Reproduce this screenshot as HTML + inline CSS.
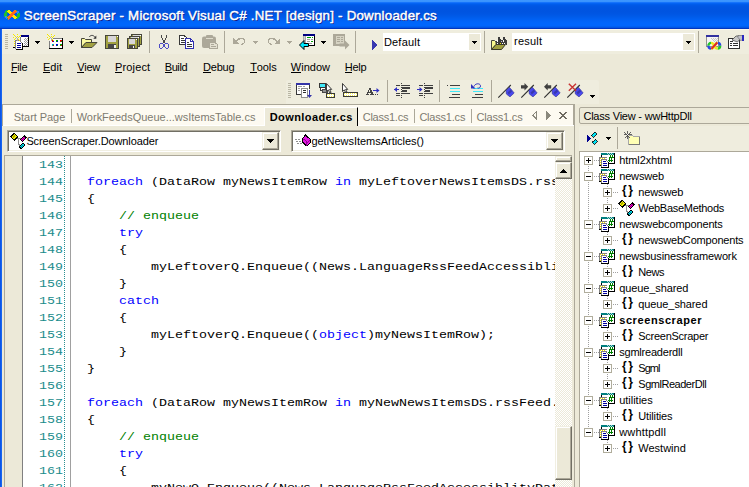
<!DOCTYPE html>
<html>
<head>
<meta charset="utf-8">
<title>ScreenScraper</title>
<style>
*{box-sizing:border-box;margin:0;padding:0}
html,body{width:749px;height:487px;overflow:hidden;background:#ece9d8}
body{position:relative;font-family:"Liberation Sans",sans-serif;font-size:11px;color:#000}
.a,.a>i,.a>b,.a>s{position:absolute;display:block}
i,s{font-style:normal;text-decoration:none}
svg{position:absolute;overflow:visible;shape-rendering:crispEdges}
.t{position:absolute;white-space:nowrap;font-size:11px;line-height:13px}
u{text-decoration:none;border-bottom:1px solid #000;display:inline-block;line-height:13px;height:12px;vertical-align:top}
.sep{position:absolute;width:1px;background:#aca899}
.grip{position:absolute;width:3px;background:repeating-linear-gradient(#b8b5a3 0,#b8b5a3 1px,rgba(0,0,0,0) 1px,rgba(0,0,0,0) 2px)}
.tri{position:absolute;width:0;height:0;border-left:3px solid transparent;border-right:3px solid transparent;border-top:3px solid #000}
.dith{background-image:conic-gradient(#fff 25%,#ece9d8 0 50%,#fff 0 75%,#ece9d8 0);background-size:2px 2px}
.btn{position:absolute;background:#ece9d8;border:1px solid;border-color:#f1efe2 #716f64 #716f64 #f1efe2;box-shadow:inset -1px -1px 0 #aca899,inset 1px 1px 0 #fff}
.sunk{position:absolute;background:#fff;border:1px solid;border-color:#aca899 #fff #fff #aca899;box-shadow:inset 1px 1px 0 #716f64,inset -1px -1px 0 #f1efe2}
.mono{font-family:"Liberation Mono",monospace;font-size:13.333px;line-height:20px;white-space:pre;transform:scaleY(.85);transform-origin:0 0}
.k{color:#0000ff}.c{color:#008000}
</style>
</head>
<body>
<div class="a" style="left:0;top:0;width:749px;height:29px;background:linear-gradient(#3c96ff 0px,#3a93fd 1.5px,#1573fb 2.5px,#0463f3 3.5px,#005ceb 4.5px,#0058e6 5.5px,#0055e2 7px,#0054e0 11px,#0056e3 14px,#005cea 17px,#0062f5 20px,#0066fc 23px,#0066fc 25.5px,#0060f2 26.5px,#0055e3 27.5px,#003cc8 28.2px,#002eb4 29px)"></div>
<div class="t" style="left:23.80px;top:8px;font-size:13.33px;letter-spacing:0.221px;line-height:15px;color:#fff;text-shadow:1px 1px 0 #0a1883;-webkit-text-stroke:0.45px #fff">ScreenScraper - Microsoft Visual C# .NET [design] - Downloader.cs</div>
<svg style="left:4px;top:10px" width="16" height="10" viewBox="0 0 16 10" shape-rendering="auto" fill="none">
<path d="M4.300 1.300 A3 3.400 0 0 0 4.300 8.100" stroke="#1fc030" stroke-width="2.600"/>
<path d="M1.400 5.800 A3 3.400 0 0 0 3.400 8" stroke="#2a90f0" stroke-width="2.200"/>
<path d="M11.600 1.300 A3 3.400 0 0 1 11.600 8.100" stroke="#1fc030" stroke-width="2.600"/>
<path d="M12.600 1.400 A3 3.400 0 0 1 14.400 3.400" stroke="#2a90f0" stroke-width="2.200"/>
<path d="M4 0.800 L12 8.600" stroke="#ffe400" stroke-width="3"/>
<path d="M3.800 8.800 L12.200 0.600" stroke="#ff6a1c" stroke-width="2.900"/>
</svg>
<div class="a" style="left:0;top:29px;width:2px;height:458px;background:linear-gradient(90deg,#0c55e6 0,#0c55e6 1px,#1765f0 1px,#1765f0 2px)"></div>
<div class="t" style="left:11.00px;top:61px;letter-spacing:-0.411px;"><u>F</u>ile</div>
<div class="t" style="left:42.90px;top:61px;letter-spacing:0.044px;"><u>E</u>dit</div>
<div class="t" style="left:77.30px;top:61px;letter-spacing:-0.352px;"><u>V</u>iew</div>
<div class="t" style="left:115.00px;top:61px;letter-spacing:0.142px;"><u>P</u>roject</div>
<div class="t" style="left:164.70px;top:61px;letter-spacing:-0.392px;"><u>B</u>uild</div>
<div class="t" style="left:203.00px;top:61px;letter-spacing:-0.205px;"><u>D</u>ebug</div>
<div class="t" style="left:250.20px;top:61px;letter-spacing:-0.097px;"><u>T</u>ools</div>
<div class="t" style="left:290.80px;top:61px;letter-spacing:0.015px;"><u>W</u>indow</div>
<div class="t" style="left:344.80px;top:61px;letter-spacing:-0.275px;"><u>H</u>elp</div>
<div class="a" style="left:2px;top:104px;width:572px;height:22px;background:#fdfaf1;border-top:1px solid #aca899;border-left:1px solid #aca899;border-right:1px solid #aca899"></div>
<div class="a" style="left:3px;top:125px;width:571px;height:1px;background:#fff"></div>
<div class="a" style="left:264px;top:107px;width:94px;height:19px;background:#ece9d8;border-left:1px solid #fff;border-top:1px solid #fff;border-right:1px solid #000"></div>
<div class="t" style="left:13.80px;top:111px;letter-spacing:-0.054px;color:#7d7b70">Start Page</div>
<div class="t" style="left:76.70px;top:111px;letter-spacing:-0.007px;color:#7d7b70">WorkFeedsQueue...wsItemsTable.cs</div>
<div class="t" style="left:269.70px;top:111px;font-weight:bold;letter-spacing:0.422px;color:#000">Downloader.cs</div>
<div class="t" style="left:362.70px;top:111px;letter-spacing:-0.248px;color:#7d7b70">Class1.cs</div>
<div class="t" style="left:419.40px;top:111px;letter-spacing:-0.211px;color:#7d7b70">Class1.cs</div>
<div class="t" style="left:476.40px;top:111px;letter-spacing:-0.173px;color:#7d7b70">Class1.cs</div>
<div class="sep" style="left:71px;top:109px;height:14px"></div>
<div class="sep" style="left:414px;top:109px;height:14px"></div>
<div class="sep" style="left:471px;top:109px;height:14px"></div>
<svg style="left:532px;top:111px" width="36" height="9" viewBox="0 0 36 9" shape-rendering="auto">
<path d="M4.5 0.8 L0.8 4.5 L4.5 8.2 Z" fill="none" stroke="#8a887d" stroke-width="1"/>
<path d="M14 0 L18.5 4.5 L14 9 Z" fill="#8a887d"/>
<path d="M27.500 1 L34.500 8 M34.500 1 L27.500 8" stroke="#6e6a60" stroke-width="1.900" fill="none"/>
</svg>
<div class="sunk" style="left:7px;top:130px;width:274px;height:22px"></div>
<div class="btn" style="left:262px;top:132px;width:17px;height:18px"></div>
<svg style="left:267px;top:139px" width="7" height="4" viewBox="0 0 7 4"><path d="M0 0 H7 V1 H6 V2 H5 V3 H4 V4 H3 V3 H2 V2 H1 V1 H0 Z" fill="#000"/></svg>
<div class="sunk" style="left:291px;top:130px;width:274px;height:22px"></div>
<div class="btn" style="left:546px;top:132px;width:17px;height:18px"></div>
<svg style="left:551px;top:139px" width="7" height="4" viewBox="0 0 7 4"><path d="M0 0 H7 V1 H6 V2 H5 V3 H4 V4 H3 V3 H2 V2 H1 V1 H0 Z" fill="#000"/></svg>
<div class="t" style="left:26.40px;top:135px;letter-spacing:-0.110px;">ScreenScraper.Downloader</div>
<div class="t" style="left:311.40px;top:135px;letter-spacing:-0.032px;">getNewsItemsArticles()</div>
<svg style="left:294px;top:134px" width="17" height="13" viewBox="0 0 17 13" shape-rendering="auto">
<path d="M1 5.5 H6 M2 7.5 H7 M3 9.5 H8" stroke="#909090" stroke-width="1" stroke-dasharray="2 1" fill="none"/>
<path d="M11.5 1 L8.3 5 L8.8 8.5 L12.8 12 L16 8.8 L16 5.2 Z" fill="#e218e2" stroke="#000" stroke-width="1"/>
<path d="M8.5 5 L12.5 8 L16 5.3 M12.5 8 L12.8 12" stroke="#8a008a" stroke-width="0.9" fill="none"/>
</svg>
<div class="a" style="left:4px;top:155px;width:568px;height:332px;background:#fff;border-top:1px solid #aca899;border-left:1px solid #aca899"></div>
<div class="a" style="left:5px;top:156px;width:17px;height:331px;background:#ece9d8"></div>
<div class="a" style="left:22px;top:156px;width:1px;height:331px;background:#808080"></div>
<div class="a" style="left:64px;top:156px;width:1px;height:331px;background:repeating-linear-gradient(#2a9090 0,#2a9090 1px,#fff 1px,#fff 2px)"></div>
<div class="a" style="left:70px;top:156px;width:1px;height:331px;background:#a0a0a0"></div>
<div class="a mono" style="left:23px;top:157px;width:40px;height:392px;overflow:hidden;color:#1a8c8c;text-align:right">143
144
145
146
147
148
149
150
151
152
153
154
155
156
157
158
159
160
161
162</div>
<div class="a mono" style="left:87px;top:157px;width:468px;height:392px;overflow:hidden">
<i style="position:static;display:inline" class="k">foreach</i> (DataRow myNewsItemRow <i style="position:static;display:inline" class="k">in</i> myLeftoverNewsItemsDS.rssFeed.Rows)
{
    <i style="position:static;display:inline" class="c">// enqueue</i>
    <i style="position:static;display:inline" class="k">try</i>
    {
        myLeftoverQ.Enqueue((News.LanguageRssFeedAccessiblityDataset.rssFeedRow)myNewsItemRow);
    }
    <i style="position:static;display:inline" class="k">catch</i>
    {
        myLeftoverQ.Enqueue((<i style="position:static;display:inline" class="k">object</i>)myNewsItemRow);
    }
}

<i style="position:static;display:inline" class="k">foreach</i> (DataRow myNewsItemRow <i style="position:static;display:inline" class="k">in</i> myNewNewsItemsDS.rssFeed.Rows)
{
    <i style="position:static;display:inline" class="c">// enqueue</i>
    <i style="position:static;display:inline" class="k">try</i>
    {
        myNewQ.Enqueue((News.LanguageRssFeedAccessiblityDataset.rssFeedRow)myNewsItemRow);</div>
<div class="a dith" style="left:555px;top:156px;width:17px;height:331px"></div>
<div class="btn" style="left:555px;top:156px;width:17px;height:6px"></div>
<div class="btn" style="left:555px;top:162px;width:17px;height:17px"></div>
<svg style="left:560px;top:169px" width="7" height="4" viewBox="0 0 7 4"><path d="M3 0 H4 V1 H5 V2 H6 V3 H7 V4 H0 V3 H1 V2 H2 V1 H3 Z" fill="#000"/></svg>
<div class="btn" style="left:555px;top:426px;width:17px;height:54px"></div>
<div class="a" style="left:574px;top:104px;width:1px;height:383px;background:#aca899"></div>
<div class="a" style="left:579px;top:107px;width:175px;height:17px;border:1px solid #aca899;border-radius:2px"></div>
<div class="t" style="left:583.40px;top:110px;letter-spacing:-0.208px;">Class View - wwHttpDll</div>
<div class="a" style="left:579px;top:126px;width:170px;height:25px;background:#efedde;border-radius:2px 0 0 0"></div>
<svg style="left:586px;top:131px" width="14" height="15" viewBox="0 0 14 15" shape-rendering="auto">
<path d="M1 3.500 L5.200 7.300 L1 11.200 Z" fill="#000090"/>
<path d="M5.300 4.200 L8.800 1.100 L10.900 3.200 L7.400 6.300 Z" fill="#00e4f4" stroke="#000" stroke-width="0.800"/>
<path d="M6.100 11.300 L9.600 8.200 L11.700 10.300 L8.200 13.400 Z" fill="#00e4f4" stroke="#000" stroke-width="0.800"/>
</svg>
<svg style="left:606px;top:137px" width="5" height="3" viewBox="0 0 5 3"><path d="M0 0 H5 V1 H4 V2 H3 V3 H2 V2 H1 V1 H0 Z" fill="#000"/></svg>
<div class="sep" style="left:617px;top:127px;height:22px"></div>
<svg style="left:623px;top:130px" width="18" height="15" viewBox="0 0 18 15" shape-rendering="auto">
<path d="M5.500 6.500 L6.500 5.500 H9.500 L10.500 6.500 H16 V14 H5.500 Z" fill="#ffffb4" stroke="#a8a8a8" stroke-width="1"/>
<path d="M6 14.500 H16.700 V7" stroke="#787878" stroke-width="1" fill="none"/>
<path d="M4.500 0.500 V8.500 M0.500 4.500 H8.500 M1.500 1.500 L7.500 7.500 M7.500 1.500 L1.500 7.500" stroke="#404040" stroke-width="0.800" fill="none"/>
<rect x="4" y="4" width="1" height="1" fill="#fff"/>
</svg>
<div class="a" style="left:579px;top:151px;width:175px;height:340px;background:#fff;border:1px solid #aca899"></div>
<svg style="left:10px;top:133px" width="17" height="16" viewBox="0 0 17 16" shape-rendering="auto">
<path d="M6.500 5.500 H10.500 M8.500 5.500 V11 L10 12.500" fill="none" stroke="#909090" stroke-width="1"/>
<path d="M0.500 3.800 L4.100 0.300 L7.800 3.800 L4.100 7.400 Z" fill="#ecec00" stroke="#000" stroke-width="1"/>
<path d="M2.800 4.700 L5.300 2.400" stroke="#b0a800" stroke-width="1.200"/>
<path d="M16.200 4.700 L14.300 2.800 L10.600 6.500 L12.500 8.400 Z" fill="#f000d0" stroke="#000" stroke-width="1"/>
<path d="M12 6.800 L14.600 4.300" stroke="#900078" stroke-width="1"/>
<path d="M14.900 12.100 L13 10.200 L9.300 13.900 L11.200 15.800 Z" fill="#00d8e8" stroke="#000" stroke-width="1"/>
<path d="M10.800 14.200 L13.400 11.700" stroke="#008898" stroke-width="1"/>
</svg>
<div class="a" style="left:588px;top:160px;width:1px;height:272px;background:repeating-linear-gradient(#a0a0a0 0,#a0a0a0 1px,rgba(0,0,0,0) 1px,rgba(0,0,0,0) 2px)"></div>
<div class="a" style="left:594px;top:160px;width:6px;height:1px;background:repeating-linear-gradient(90deg,#a0a0a0 0,#a0a0a0 1px,rgba(0,0,0,0) 1px,rgba(0,0,0,0) 2px)"></div>
<svg style="left:584px;top:156px" width="9" height="9" viewBox="0 0 9 9"><rect x="0.5" y="0.5" width="8" height="8" fill="#fff" stroke="#b0ad9c"/><path d="M2 4.5 H7" stroke="#000"/><path d="M4.5 2 V7" stroke="#000"/></svg>
<svg style="left:598px;top:152px" width="17" height="16" viewBox="0 0 17 16">
<rect x="3" y="1" width="13" height="2" fill="#008080"/>
<path d="M10 2 h1 v1 h-1 z M12 2 h1 v1 h-1 z M14 2 h1 v1 h-1 z M9 1 h1 v1 h-1 z M11 1 h1 v1 h-1 z M13 1 h1 v1 h-1 z" fill="#b0d8d8"/>
<rect x="3" y="3" width="1" height="3" fill="#000"/>
<rect x="16" y="1" width="1" height="11" fill="#000"/>
<rect x="11" y="11" width="6" height="1" fill="#000"/>
<path d="M12 3 h1 v3 h-1 z M14 3 h1 v3 h-1 z M11 6 h1 v4 h-1 z M13 6 h1 v4 h-1 z M11 5 h5 v1 h-5 z M10 8 h5 v1 h-5 z" fill="#008000"/>
<rect x="1" y="5" width="1" height="8" fill="#808080"/>
<rect x="1" y="5" width="8" height="1" fill="#808080"/>
<path d="M2 6 h1 v1 h-1 z M4 6 h1 v1 h-1 z M6 6 h1 v1 h-1 z M2 8 h1 v1 h-1 z M2 10 h1 v1 h-1 z M2 12 h1 v1 h-1 z" fill="#f0e000"/>
<rect x="1" y="13" width="2" height="1" fill="#000"/>
<rect x="4" y="8" width="6" height="7" fill="#fff"/>
<rect x="3" y="7" width="6" height="1" fill="#808080"/>
<rect x="3" y="7" width="1" height="8" fill="#808080"/>
<path d="M8 8 h1 v1 h-1 z M9 9 h1 v1 h-1 z" fill="#808080"/>
<path d="M5 9 h3 v1 h-3 z M5 11 h4 v1 h-4 z M5 13 h4 v1 h-4 z" fill="#0000a0"/>
<rect x="10" y="10" width="1" height="6" fill="#000"/>
<rect x="3" y="15" width="8" height="1" fill="#000"/>
</svg>
<div class="t" style="left:619.20px;top:154px;letter-spacing:-0.054px;">html2xhtml</div>
<div class="a" style="left:594px;top:176px;width:6px;height:1px;background:repeating-linear-gradient(90deg,#a0a0a0 0,#a0a0a0 1px,rgba(0,0,0,0) 1px,rgba(0,0,0,0) 2px)"></div>
<svg style="left:584px;top:172px" width="9" height="9" viewBox="0 0 9 9"><rect x="0.5" y="0.5" width="8" height="8" fill="#fff" stroke="#b0ad9c"/><path d="M2 4.5 H7" stroke="#000"/></svg>
<svg style="left:598px;top:168px" width="17" height="16" viewBox="0 0 17 16">
<rect x="3" y="1" width="13" height="2" fill="#008080"/>
<path d="M10 2 h1 v1 h-1 z M12 2 h1 v1 h-1 z M14 2 h1 v1 h-1 z M9 1 h1 v1 h-1 z M11 1 h1 v1 h-1 z M13 1 h1 v1 h-1 z" fill="#b0d8d8"/>
<rect x="3" y="3" width="1" height="3" fill="#000"/>
<rect x="16" y="1" width="1" height="11" fill="#000"/>
<rect x="11" y="11" width="6" height="1" fill="#000"/>
<path d="M12 3 h1 v3 h-1 z M14 3 h1 v3 h-1 z M11 6 h1 v4 h-1 z M13 6 h1 v4 h-1 z M11 5 h5 v1 h-5 z M10 8 h5 v1 h-5 z" fill="#008000"/>
<rect x="1" y="5" width="1" height="8" fill="#808080"/>
<rect x="1" y="5" width="8" height="1" fill="#808080"/>
<path d="M2 6 h1 v1 h-1 z M4 6 h1 v1 h-1 z M6 6 h1 v1 h-1 z M2 8 h1 v1 h-1 z M2 10 h1 v1 h-1 z M2 12 h1 v1 h-1 z" fill="#f0e000"/>
<rect x="1" y="13" width="2" height="1" fill="#000"/>
<rect x="4" y="8" width="6" height="7" fill="#fff"/>
<rect x="3" y="7" width="6" height="1" fill="#808080"/>
<rect x="3" y="7" width="1" height="8" fill="#808080"/>
<path d="M8 8 h1 v1 h-1 z M9 9 h1 v1 h-1 z" fill="#808080"/>
<path d="M5 9 h3 v1 h-3 z M5 11 h4 v1 h-4 z M5 13 h4 v1 h-4 z" fill="#0000a0"/>
<rect x="10" y="10" width="1" height="6" fill="#000"/>
<rect x="3" y="15" width="8" height="1" fill="#000"/>
</svg>
<div class="t" style="left:619.20px;top:170px;letter-spacing:-0.160px;">newsweb</div>
<div class="a" style="left:613px;top:192px;width:5px;height:1px;background:repeating-linear-gradient(90deg,#a0a0a0 0,#a0a0a0 1px,rgba(0,0,0,0) 1px,rgba(0,0,0,0) 2px)"></div>
<svg style="left:603px;top:188px" width="9" height="9" viewBox="0 0 9 9"><rect x="0.5" y="0.5" width="8" height="8" fill="#fff" stroke="#b0ad9c"/><path d="M2 4.5 H7" stroke="#000"/><path d="M4.5 2 V7" stroke="#000"/></svg>
<div class="a" style="left:607px;top:184px;width:1px;height:4px;background:repeating-linear-gradient(#a0a0a0 0,#a0a0a0 1px,rgba(0,0,0,0) 1px,rgba(0,0,0,0) 2px)"></div>
<div class="a" style="left:607px;top:198px;width:1px;height:6px;background:repeating-linear-gradient(#a0a0a0 0,#a0a0a0 1px,rgba(0,0,0,0) 1px,rgba(0,0,0,0) 2px)"></div>
<div class="t" style="left:622px;top:183px;font-weight:bold;font-size:12px;line-height:15px;letter-spacing:1.6px">{}</div>
<div class="t" style="left:638.30px;top:186px;letter-spacing:-0.127px;">newsweb</div>
<div class="a" style="left:613px;top:208px;width:5px;height:1px;background:repeating-linear-gradient(90deg,#a0a0a0 0,#a0a0a0 1px,rgba(0,0,0,0) 1px,rgba(0,0,0,0) 2px)"></div>
<svg style="left:603px;top:204px" width="9" height="9" viewBox="0 0 9 9"><rect x="0.5" y="0.5" width="8" height="8" fill="#fff" stroke="#b0ad9c"/><path d="M2 4.5 H7" stroke="#000"/><path d="M4.5 2 V7" stroke="#000"/></svg>
<div class="a" style="left:607px;top:200px;width:1px;height:4px;background:repeating-linear-gradient(#a0a0a0 0,#a0a0a0 1px,rgba(0,0,0,0) 1px,rgba(0,0,0,0) 2px)"></div>
<svg style="left:618px;top:200px" width="17" height="16" viewBox="0 0 17 16" shape-rendering="auto">
<path d="M6.500 5.500 H10.500 M8.500 5.500 V11 L10 12.500" fill="none" stroke="#909090" stroke-width="1"/>
<path d="M0.500 3.800 L4.100 0.300 L7.800 3.800 L4.100 7.400 Z" fill="#ecec00" stroke="#000" stroke-width="1"/>
<path d="M2.800 4.700 L5.300 2.400" stroke="#b0a800" stroke-width="1.200"/>
<path d="M16.200 4.700 L14.300 2.800 L10.600 6.500 L12.500 8.400 Z" fill="#f000d0" stroke="#000" stroke-width="1"/>
<path d="M12 6.800 L14.600 4.300" stroke="#900078" stroke-width="1"/>
<path d="M14.900 12.100 L13 10.200 L9.300 13.900 L11.200 15.800 Z" fill="#00d8e8" stroke="#000" stroke-width="1"/>
<path d="M10.800 14.200 L13.400 11.700" stroke="#008898" stroke-width="1"/>
</svg>
<div class="t" style="left:638.30px;top:202px;letter-spacing:-0.284px;">WebBaseMethods</div>
<div class="a" style="left:594px;top:224px;width:6px;height:1px;background:repeating-linear-gradient(90deg,#a0a0a0 0,#a0a0a0 1px,rgba(0,0,0,0) 1px,rgba(0,0,0,0) 2px)"></div>
<svg style="left:584px;top:220px" width="9" height="9" viewBox="0 0 9 9"><rect x="0.5" y="0.5" width="8" height="8" fill="#fff" stroke="#b0ad9c"/><path d="M2 4.5 H7" stroke="#000"/></svg>
<svg style="left:598px;top:216px" width="17" height="16" viewBox="0 0 17 16">
<rect x="3" y="1" width="13" height="2" fill="#008080"/>
<path d="M10 2 h1 v1 h-1 z M12 2 h1 v1 h-1 z M14 2 h1 v1 h-1 z M9 1 h1 v1 h-1 z M11 1 h1 v1 h-1 z M13 1 h1 v1 h-1 z" fill="#b0d8d8"/>
<rect x="3" y="3" width="1" height="3" fill="#000"/>
<rect x="16" y="1" width="1" height="11" fill="#000"/>
<rect x="11" y="11" width="6" height="1" fill="#000"/>
<path d="M12 3 h1 v3 h-1 z M14 3 h1 v3 h-1 z M11 6 h1 v4 h-1 z M13 6 h1 v4 h-1 z M11 5 h5 v1 h-5 z M10 8 h5 v1 h-5 z" fill="#008000"/>
<rect x="1" y="5" width="1" height="8" fill="#808080"/>
<rect x="1" y="5" width="8" height="1" fill="#808080"/>
<path d="M2 6 h1 v1 h-1 z M4 6 h1 v1 h-1 z M6 6 h1 v1 h-1 z M2 8 h1 v1 h-1 z M2 10 h1 v1 h-1 z M2 12 h1 v1 h-1 z" fill="#f0e000"/>
<rect x="1" y="13" width="2" height="1" fill="#000"/>
<rect x="4" y="8" width="6" height="7" fill="#fff"/>
<rect x="3" y="7" width="6" height="1" fill="#808080"/>
<rect x="3" y="7" width="1" height="8" fill="#808080"/>
<path d="M8 8 h1 v1 h-1 z M9 9 h1 v1 h-1 z" fill="#808080"/>
<path d="M5 9 h3 v1 h-3 z M5 11 h4 v1 h-4 z M5 13 h4 v1 h-4 z" fill="#0000a0"/>
<rect x="10" y="10" width="1" height="6" fill="#000"/>
<rect x="3" y="15" width="8" height="1" fill="#000"/>
</svg>
<div class="t" style="left:619.20px;top:218px;letter-spacing:-0.137px;">newswebcomponents</div>
<div class="a" style="left:613px;top:240px;width:5px;height:1px;background:repeating-linear-gradient(90deg,#a0a0a0 0,#a0a0a0 1px,rgba(0,0,0,0) 1px,rgba(0,0,0,0) 2px)"></div>
<svg style="left:603px;top:236px" width="9" height="9" viewBox="0 0 9 9"><rect x="0.5" y="0.5" width="8" height="8" fill="#fff" stroke="#b0ad9c"/><path d="M2 4.5 H7" stroke="#000"/><path d="M4.5 2 V7" stroke="#000"/></svg>
<div class="a" style="left:607px;top:232px;width:1px;height:4px;background:repeating-linear-gradient(#a0a0a0 0,#a0a0a0 1px,rgba(0,0,0,0) 1px,rgba(0,0,0,0) 2px)"></div>
<div class="t" style="left:622px;top:231px;font-weight:bold;font-size:12px;line-height:15px;letter-spacing:1.6px">{}</div>
<div class="t" style="left:638.30px;top:234px;letter-spacing:-0.183px;">newswebComponents</div>
<div class="a" style="left:594px;top:256px;width:6px;height:1px;background:repeating-linear-gradient(90deg,#a0a0a0 0,#a0a0a0 1px,rgba(0,0,0,0) 1px,rgba(0,0,0,0) 2px)"></div>
<svg style="left:584px;top:252px" width="9" height="9" viewBox="0 0 9 9"><rect x="0.5" y="0.5" width="8" height="8" fill="#fff" stroke="#b0ad9c"/><path d="M2 4.5 H7" stroke="#000"/></svg>
<svg style="left:598px;top:248px" width="17" height="16" viewBox="0 0 17 16">
<rect x="3" y="1" width="13" height="2" fill="#008080"/>
<path d="M10 2 h1 v1 h-1 z M12 2 h1 v1 h-1 z M14 2 h1 v1 h-1 z M9 1 h1 v1 h-1 z M11 1 h1 v1 h-1 z M13 1 h1 v1 h-1 z" fill="#b0d8d8"/>
<rect x="3" y="3" width="1" height="3" fill="#000"/>
<rect x="16" y="1" width="1" height="11" fill="#000"/>
<rect x="11" y="11" width="6" height="1" fill="#000"/>
<path d="M12 3 h1 v3 h-1 z M14 3 h1 v3 h-1 z M11 6 h1 v4 h-1 z M13 6 h1 v4 h-1 z M11 5 h5 v1 h-5 z M10 8 h5 v1 h-5 z" fill="#008000"/>
<rect x="1" y="5" width="1" height="8" fill="#808080"/>
<rect x="1" y="5" width="8" height="1" fill="#808080"/>
<path d="M2 6 h1 v1 h-1 z M4 6 h1 v1 h-1 z M6 6 h1 v1 h-1 z M2 8 h1 v1 h-1 z M2 10 h1 v1 h-1 z M2 12 h1 v1 h-1 z" fill="#f0e000"/>
<rect x="1" y="13" width="2" height="1" fill="#000"/>
<rect x="4" y="8" width="6" height="7" fill="#fff"/>
<rect x="3" y="7" width="6" height="1" fill="#808080"/>
<rect x="3" y="7" width="1" height="8" fill="#808080"/>
<path d="M8 8 h1 v1 h-1 z M9 9 h1 v1 h-1 z" fill="#808080"/>
<path d="M5 9 h3 v1 h-3 z M5 11 h4 v1 h-4 z M5 13 h4 v1 h-4 z" fill="#0000a0"/>
<rect x="10" y="10" width="1" height="6" fill="#000"/>
<rect x="3" y="15" width="8" height="1" fill="#000"/>
</svg>
<div class="t" style="left:619.20px;top:250px;letter-spacing:-0.137px;">newsbusinessframework</div>
<div class="a" style="left:613px;top:272px;width:5px;height:1px;background:repeating-linear-gradient(90deg,#a0a0a0 0,#a0a0a0 1px,rgba(0,0,0,0) 1px,rgba(0,0,0,0) 2px)"></div>
<svg style="left:603px;top:268px" width="9" height="9" viewBox="0 0 9 9"><rect x="0.5" y="0.5" width="8" height="8" fill="#fff" stroke="#b0ad9c"/><path d="M2 4.5 H7" stroke="#000"/><path d="M4.5 2 V7" stroke="#000"/></svg>
<div class="a" style="left:607px;top:264px;width:1px;height:4px;background:repeating-linear-gradient(#a0a0a0 0,#a0a0a0 1px,rgba(0,0,0,0) 1px,rgba(0,0,0,0) 2px)"></div>
<div class="t" style="left:622px;top:263px;font-weight:bold;font-size:12px;line-height:15px;letter-spacing:1.6px">{}</div>
<div class="t" style="left:638.30px;top:266px;letter-spacing:-0.405px;">News</div>
<div class="a" style="left:594px;top:288px;width:6px;height:1px;background:repeating-linear-gradient(90deg,#a0a0a0 0,#a0a0a0 1px,rgba(0,0,0,0) 1px,rgba(0,0,0,0) 2px)"></div>
<svg style="left:584px;top:284px" width="9" height="9" viewBox="0 0 9 9"><rect x="0.5" y="0.5" width="8" height="8" fill="#fff" stroke="#b0ad9c"/><path d="M2 4.5 H7" stroke="#000"/></svg>
<svg style="left:598px;top:280px" width="17" height="16" viewBox="0 0 17 16">
<rect x="3" y="1" width="13" height="2" fill="#008080"/>
<path d="M10 2 h1 v1 h-1 z M12 2 h1 v1 h-1 z M14 2 h1 v1 h-1 z M9 1 h1 v1 h-1 z M11 1 h1 v1 h-1 z M13 1 h1 v1 h-1 z" fill="#b0d8d8"/>
<rect x="3" y="3" width="1" height="3" fill="#000"/>
<rect x="16" y="1" width="1" height="11" fill="#000"/>
<rect x="11" y="11" width="6" height="1" fill="#000"/>
<path d="M12 3 h1 v3 h-1 z M14 3 h1 v3 h-1 z M11 6 h1 v4 h-1 z M13 6 h1 v4 h-1 z M11 5 h5 v1 h-5 z M10 8 h5 v1 h-5 z" fill="#008000"/>
<rect x="1" y="5" width="1" height="8" fill="#808080"/>
<rect x="1" y="5" width="8" height="1" fill="#808080"/>
<path d="M2 6 h1 v1 h-1 z M4 6 h1 v1 h-1 z M6 6 h1 v1 h-1 z M2 8 h1 v1 h-1 z M2 10 h1 v1 h-1 z M2 12 h1 v1 h-1 z" fill="#f0e000"/>
<rect x="1" y="13" width="2" height="1" fill="#000"/>
<rect x="4" y="8" width="6" height="7" fill="#fff"/>
<rect x="3" y="7" width="6" height="1" fill="#808080"/>
<rect x="3" y="7" width="1" height="8" fill="#808080"/>
<path d="M8 8 h1 v1 h-1 z M9 9 h1 v1 h-1 z" fill="#808080"/>
<path d="M5 9 h3 v1 h-3 z M5 11 h4 v1 h-4 z M5 13 h4 v1 h-4 z" fill="#0000a0"/>
<rect x="10" y="10" width="1" height="6" fill="#000"/>
<rect x="3" y="15" width="8" height="1" fill="#000"/>
</svg>
<div class="t" style="left:619.20px;top:282px;letter-spacing:-0.095px;">queue_shared</div>
<div class="a" style="left:613px;top:304px;width:5px;height:1px;background:repeating-linear-gradient(90deg,#a0a0a0 0,#a0a0a0 1px,rgba(0,0,0,0) 1px,rgba(0,0,0,0) 2px)"></div>
<svg style="left:603px;top:300px" width="9" height="9" viewBox="0 0 9 9"><rect x="0.5" y="0.5" width="8" height="8" fill="#fff" stroke="#b0ad9c"/><path d="M2 4.5 H7" stroke="#000"/><path d="M4.5 2 V7" stroke="#000"/></svg>
<div class="a" style="left:607px;top:296px;width:1px;height:4px;background:repeating-linear-gradient(#a0a0a0 0,#a0a0a0 1px,rgba(0,0,0,0) 1px,rgba(0,0,0,0) 2px)"></div>
<div class="t" style="left:622px;top:295px;font-weight:bold;font-size:12px;line-height:15px;letter-spacing:1.6px">{}</div>
<div class="t" style="left:638.30px;top:298px;letter-spacing:-0.104px;">queue_shared</div>
<div class="a" style="left:594px;top:320px;width:6px;height:1px;background:repeating-linear-gradient(90deg,#a0a0a0 0,#a0a0a0 1px,rgba(0,0,0,0) 1px,rgba(0,0,0,0) 2px)"></div>
<svg style="left:584px;top:316px" width="9" height="9" viewBox="0 0 9 9"><rect x="0.5" y="0.5" width="8" height="8" fill="#fff" stroke="#b0ad9c"/><path d="M2 4.5 H7" stroke="#000"/></svg>
<svg style="left:598px;top:312px" width="17" height="16" viewBox="0 0 17 16">
<rect x="3" y="1" width="13" height="2" fill="#008080"/>
<path d="M10 2 h1 v1 h-1 z M12 2 h1 v1 h-1 z M14 2 h1 v1 h-1 z M9 1 h1 v1 h-1 z M11 1 h1 v1 h-1 z M13 1 h1 v1 h-1 z" fill="#b0d8d8"/>
<rect x="3" y="3" width="1" height="3" fill="#000"/>
<rect x="16" y="1" width="1" height="11" fill="#000"/>
<rect x="11" y="11" width="6" height="1" fill="#000"/>
<path d="M12 3 h1 v3 h-1 z M14 3 h1 v3 h-1 z M11 6 h1 v4 h-1 z M13 6 h1 v4 h-1 z M11 5 h5 v1 h-5 z M10 8 h5 v1 h-5 z" fill="#008000"/>
<rect x="1" y="5" width="1" height="8" fill="#808080"/>
<rect x="1" y="5" width="8" height="1" fill="#808080"/>
<path d="M2 6 h1 v1 h-1 z M4 6 h1 v1 h-1 z M6 6 h1 v1 h-1 z M2 8 h1 v1 h-1 z M2 10 h1 v1 h-1 z M2 12 h1 v1 h-1 z" fill="#f0e000"/>
<rect x="1" y="13" width="2" height="1" fill="#000"/>
<rect x="4" y="8" width="6" height="7" fill="#fff"/>
<rect x="3" y="7" width="6" height="1" fill="#808080"/>
<rect x="3" y="7" width="1" height="8" fill="#808080"/>
<path d="M8 8 h1 v1 h-1 z M9 9 h1 v1 h-1 z" fill="#808080"/>
<path d="M5 9 h3 v1 h-3 z M5 11 h4 v1 h-4 z M5 13 h4 v1 h-4 z" fill="#0000a0"/>
<rect x="10" y="10" width="1" height="6" fill="#000"/>
<rect x="3" y="15" width="8" height="1" fill="#000"/>
</svg>
<div class="t" style="left:619.20px;top:314px;font-weight:bold;letter-spacing:0.589px;">screenscraper</div>
<div class="a" style="left:613px;top:336px;width:5px;height:1px;background:repeating-linear-gradient(90deg,#a0a0a0 0,#a0a0a0 1px,rgba(0,0,0,0) 1px,rgba(0,0,0,0) 2px)"></div>
<svg style="left:603px;top:332px" width="9" height="9" viewBox="0 0 9 9"><rect x="0.5" y="0.5" width="8" height="8" fill="#fff" stroke="#b0ad9c"/><path d="M2 4.5 H7" stroke="#000"/><path d="M4.5 2 V7" stroke="#000"/></svg>
<div class="a" style="left:607px;top:328px;width:1px;height:4px;background:repeating-linear-gradient(#a0a0a0 0,#a0a0a0 1px,rgba(0,0,0,0) 1px,rgba(0,0,0,0) 2px)"></div>
<div class="t" style="left:622px;top:327px;font-weight:bold;font-size:12px;line-height:15px;letter-spacing:1.6px">{}</div>
<div class="t" style="left:638.30px;top:330px;letter-spacing:-0.273px;">ScreenScraper</div>
<div class="a" style="left:594px;top:352px;width:6px;height:1px;background:repeating-linear-gradient(90deg,#a0a0a0 0,#a0a0a0 1px,rgba(0,0,0,0) 1px,rgba(0,0,0,0) 2px)"></div>
<svg style="left:584px;top:348px" width="9" height="9" viewBox="0 0 9 9"><rect x="0.5" y="0.5" width="8" height="8" fill="#fff" stroke="#b0ad9c"/><path d="M2 4.5 H7" stroke="#000"/></svg>
<svg style="left:598px;top:344px" width="17" height="16" viewBox="0 0 17 16">
<rect x="3" y="1" width="13" height="2" fill="#008080"/>
<path d="M10 2 h1 v1 h-1 z M12 2 h1 v1 h-1 z M14 2 h1 v1 h-1 z M9 1 h1 v1 h-1 z M11 1 h1 v1 h-1 z M13 1 h1 v1 h-1 z" fill="#b0d8d8"/>
<rect x="3" y="3" width="1" height="3" fill="#000"/>
<rect x="16" y="1" width="1" height="11" fill="#000"/>
<rect x="11" y="11" width="6" height="1" fill="#000"/>
<path d="M12 3 h1 v3 h-1 z M14 3 h1 v3 h-1 z M11 6 h1 v4 h-1 z M13 6 h1 v4 h-1 z M11 5 h5 v1 h-5 z M10 8 h5 v1 h-5 z" fill="#008000"/>
<rect x="1" y="5" width="1" height="8" fill="#808080"/>
<rect x="1" y="5" width="8" height="1" fill="#808080"/>
<path d="M2 6 h1 v1 h-1 z M4 6 h1 v1 h-1 z M6 6 h1 v1 h-1 z M2 8 h1 v1 h-1 z M2 10 h1 v1 h-1 z M2 12 h1 v1 h-1 z" fill="#f0e000"/>
<rect x="1" y="13" width="2" height="1" fill="#000"/>
<rect x="4" y="8" width="6" height="7" fill="#fff"/>
<rect x="3" y="7" width="6" height="1" fill="#808080"/>
<rect x="3" y="7" width="1" height="8" fill="#808080"/>
<path d="M8 8 h1 v1 h-1 z M9 9 h1 v1 h-1 z" fill="#808080"/>
<path d="M5 9 h3 v1 h-3 z M5 11 h4 v1 h-4 z M5 13 h4 v1 h-4 z" fill="#0000a0"/>
<rect x="10" y="10" width="1" height="6" fill="#000"/>
<rect x="3" y="15" width="8" height="1" fill="#000"/>
</svg>
<div class="t" style="left:619.20px;top:346px;letter-spacing:-0.211px;">sgmlreaderdll</div>
<div class="a" style="left:613px;top:368px;width:5px;height:1px;background:repeating-linear-gradient(90deg,#a0a0a0 0,#a0a0a0 1px,rgba(0,0,0,0) 1px,rgba(0,0,0,0) 2px)"></div>
<svg style="left:603px;top:364px" width="9" height="9" viewBox="0 0 9 9"><rect x="0.5" y="0.5" width="8" height="8" fill="#fff" stroke="#b0ad9c"/><path d="M2 4.5 H7" stroke="#000"/><path d="M4.5 2 V7" stroke="#000"/></svg>
<div class="a" style="left:607px;top:360px;width:1px;height:4px;background:repeating-linear-gradient(#a0a0a0 0,#a0a0a0 1px,rgba(0,0,0,0) 1px,rgba(0,0,0,0) 2px)"></div>
<div class="a" style="left:607px;top:374px;width:1px;height:6px;background:repeating-linear-gradient(#a0a0a0 0,#a0a0a0 1px,rgba(0,0,0,0) 1px,rgba(0,0,0,0) 2px)"></div>
<div class="t" style="left:622px;top:359px;font-weight:bold;font-size:12px;line-height:15px;letter-spacing:1.6px">{}</div>
<div class="t" style="left:638.30px;top:362px;letter-spacing:-0.954px;">Sgml</div>
<div class="a" style="left:613px;top:384px;width:5px;height:1px;background:repeating-linear-gradient(90deg,#a0a0a0 0,#a0a0a0 1px,rgba(0,0,0,0) 1px,rgba(0,0,0,0) 2px)"></div>
<svg style="left:603px;top:380px" width="9" height="9" viewBox="0 0 9 9"><rect x="0.5" y="0.5" width="8" height="8" fill="#fff" stroke="#b0ad9c"/><path d="M2 4.5 H7" stroke="#000"/><path d="M4.5 2 V7" stroke="#000"/></svg>
<div class="a" style="left:607px;top:376px;width:1px;height:4px;background:repeating-linear-gradient(#a0a0a0 0,#a0a0a0 1px,rgba(0,0,0,0) 1px,rgba(0,0,0,0) 2px)"></div>
<div class="t" style="left:622px;top:375px;font-weight:bold;font-size:12px;line-height:15px;letter-spacing:1.6px">{}</div>
<div class="t" style="left:638.30px;top:378px;letter-spacing:-0.474px;">SgmlReaderDll</div>
<div class="a" style="left:594px;top:400px;width:6px;height:1px;background:repeating-linear-gradient(90deg,#a0a0a0 0,#a0a0a0 1px,rgba(0,0,0,0) 1px,rgba(0,0,0,0) 2px)"></div>
<svg style="left:584px;top:396px" width="9" height="9" viewBox="0 0 9 9"><rect x="0.5" y="0.5" width="8" height="8" fill="#fff" stroke="#b0ad9c"/><path d="M2 4.5 H7" stroke="#000"/></svg>
<svg style="left:598px;top:392px" width="17" height="16" viewBox="0 0 17 16">
<rect x="3" y="1" width="13" height="2" fill="#008080"/>
<path d="M10 2 h1 v1 h-1 z M12 2 h1 v1 h-1 z M14 2 h1 v1 h-1 z M9 1 h1 v1 h-1 z M11 1 h1 v1 h-1 z M13 1 h1 v1 h-1 z" fill="#b0d8d8"/>
<rect x="3" y="3" width="1" height="3" fill="#000"/>
<rect x="16" y="1" width="1" height="11" fill="#000"/>
<rect x="11" y="11" width="6" height="1" fill="#000"/>
<path d="M12 3 h1 v3 h-1 z M14 3 h1 v3 h-1 z M11 6 h1 v4 h-1 z M13 6 h1 v4 h-1 z M11 5 h5 v1 h-5 z M10 8 h5 v1 h-5 z" fill="#008000"/>
<rect x="1" y="5" width="1" height="8" fill="#808080"/>
<rect x="1" y="5" width="8" height="1" fill="#808080"/>
<path d="M2 6 h1 v1 h-1 z M4 6 h1 v1 h-1 z M6 6 h1 v1 h-1 z M2 8 h1 v1 h-1 z M2 10 h1 v1 h-1 z M2 12 h1 v1 h-1 z" fill="#f0e000"/>
<rect x="1" y="13" width="2" height="1" fill="#000"/>
<rect x="4" y="8" width="6" height="7" fill="#fff"/>
<rect x="3" y="7" width="6" height="1" fill="#808080"/>
<rect x="3" y="7" width="1" height="8" fill="#808080"/>
<path d="M8 8 h1 v1 h-1 z M9 9 h1 v1 h-1 z" fill="#808080"/>
<path d="M5 9 h3 v1 h-3 z M5 11 h4 v1 h-4 z M5 13 h4 v1 h-4 z" fill="#0000a0"/>
<rect x="10" y="10" width="1" height="6" fill="#000"/>
<rect x="3" y="15" width="8" height="1" fill="#000"/>
</svg>
<div class="t" style="left:619.20px;top:394px;letter-spacing:-0.016px;">utilities</div>
<div class="a" style="left:613px;top:416px;width:5px;height:1px;background:repeating-linear-gradient(90deg,#a0a0a0 0,#a0a0a0 1px,rgba(0,0,0,0) 1px,rgba(0,0,0,0) 2px)"></div>
<svg style="left:603px;top:412px" width="9" height="9" viewBox="0 0 9 9"><rect x="0.5" y="0.5" width="8" height="8" fill="#fff" stroke="#b0ad9c"/><path d="M2 4.5 H7" stroke="#000"/><path d="M4.5 2 V7" stroke="#000"/></svg>
<div class="a" style="left:607px;top:408px;width:1px;height:4px;background:repeating-linear-gradient(#a0a0a0 0,#a0a0a0 1px,rgba(0,0,0,0) 1px,rgba(0,0,0,0) 2px)"></div>
<div class="t" style="left:622px;top:407px;font-weight:bold;font-size:12px;line-height:15px;letter-spacing:1.6px">{}</div>
<div class="t" style="left:638.30px;top:410px;letter-spacing:-0.144px;">Utilities</div>
<div class="a" style="left:594px;top:432px;width:6px;height:1px;background:repeating-linear-gradient(90deg,#a0a0a0 0,#a0a0a0 1px,rgba(0,0,0,0) 1px,rgba(0,0,0,0) 2px)"></div>
<svg style="left:584px;top:428px" width="9" height="9" viewBox="0 0 9 9"><rect x="0.5" y="0.5" width="8" height="8" fill="#fff" stroke="#b0ad9c"/><path d="M2 4.5 H7" stroke="#000"/></svg>
<svg style="left:598px;top:424px" width="17" height="16" viewBox="0 0 17 16">
<rect x="3" y="1" width="13" height="2" fill="#008080"/>
<path d="M10 2 h1 v1 h-1 z M12 2 h1 v1 h-1 z M14 2 h1 v1 h-1 z M9 1 h1 v1 h-1 z M11 1 h1 v1 h-1 z M13 1 h1 v1 h-1 z" fill="#b0d8d8"/>
<rect x="3" y="3" width="1" height="3" fill="#000"/>
<rect x="16" y="1" width="1" height="11" fill="#000"/>
<rect x="11" y="11" width="6" height="1" fill="#000"/>
<path d="M12 3 h1 v3 h-1 z M14 3 h1 v3 h-1 z M11 6 h1 v4 h-1 z M13 6 h1 v4 h-1 z M11 5 h5 v1 h-5 z M10 8 h5 v1 h-5 z" fill="#008000"/>
<rect x="1" y="5" width="1" height="8" fill="#808080"/>
<rect x="1" y="5" width="8" height="1" fill="#808080"/>
<path d="M2 6 h1 v1 h-1 z M4 6 h1 v1 h-1 z M6 6 h1 v1 h-1 z M2 8 h1 v1 h-1 z M2 10 h1 v1 h-1 z M2 12 h1 v1 h-1 z" fill="#f0e000"/>
<rect x="1" y="13" width="2" height="1" fill="#000"/>
<rect x="4" y="8" width="6" height="7" fill="#fff"/>
<rect x="3" y="7" width="6" height="1" fill="#808080"/>
<rect x="3" y="7" width="1" height="8" fill="#808080"/>
<path d="M8 8 h1 v1 h-1 z M9 9 h1 v1 h-1 z" fill="#808080"/>
<path d="M5 9 h3 v1 h-3 z M5 11 h4 v1 h-4 z M5 13 h4 v1 h-4 z" fill="#0000a0"/>
<rect x="10" y="10" width="1" height="6" fill="#000"/>
<rect x="3" y="15" width="8" height="1" fill="#000"/>
</svg>
<div class="t" style="left:619.20px;top:426px;letter-spacing:0.181px;">wwhttpdll</div>
<div class="a" style="left:613px;top:448px;width:5px;height:1px;background:repeating-linear-gradient(90deg,#a0a0a0 0,#a0a0a0 1px,rgba(0,0,0,0) 1px,rgba(0,0,0,0) 2px)"></div>
<svg style="left:603px;top:444px" width="9" height="9" viewBox="0 0 9 9"><rect x="0.5" y="0.5" width="8" height="8" fill="#fff" stroke="#b0ad9c"/><path d="M2 4.5 H7" stroke="#000"/><path d="M4.5 2 V7" stroke="#000"/></svg>
<div class="a" style="left:607px;top:440px;width:1px;height:4px;background:repeating-linear-gradient(#a0a0a0 0,#a0a0a0 1px,rgba(0,0,0,0) 1px,rgba(0,0,0,0) 2px)"></div>
<div class="t" style="left:622px;top:439px;font-weight:bold;font-size:12px;line-height:15px;letter-spacing:1.6px">{}</div>
<div class="t" style="left:638.30px;top:442px;">Westwind</div>
<div class="a" style="left:2px;top:29px;width:747px;height:25px;background:#efedde;border-top:1px solid #f9f7ec"></div>
<div class="grip" style="left:5px;top:34px;height:15px"></div>
<svg style="left:13px;top:34px" width="17" height="16" viewBox="0 0 17 16"><rect x="8" y="3" width="7" height="9" fill="#fff"/><path d="M12 4 h1 v1 h-1 z M14 4 h1 v1 h-1 z M11 5 h1 v1 h-1 z M13 5 h1 v1 h-1 z M12 6 h1 v1 h-1 z M14 6 h1 v1 h-1 z M11 7 h1 v1 h-1 z M13 7 h1 v1 h-1 z M12 8 h1 v1 h-1 z M14 8 h1 v1 h-1 z M11 9 h1 v1 h-1 z M13 9 h1 v1 h-1 z M12 10 h1 v1 h-1 z M14 10 h1 v1 h-1 z M13 11 h1 v1 h-1 z M11 11 h1 v1 h-1 z" fill="#a0a0a0"/><rect x="8" y="1" width="8" height="2" fill="#000080"/><rect x="15" y="3" width="1" height="10" fill="#000"/><rect x="9" y="12" width="7" height="1" fill="#000"/><rect x="7" y="3" width="1" height="4" fill="#808080"/><rect x="3" y="7" width="6" height="8" fill="#fff"/><rect x="2" y="7" width="1" height="8" fill="#808080"/><rect x="2" y="6" width="5" height="1" fill="#808080"/><path d="M7 7 h1 v1 h-1 z M8 8 h1 v1 h-1 z" fill="#808080"/><rect x="9" y="9" width="1" height="7" fill="#000"/><rect x="3" y="15" width="7" height="1" fill="#000"/><rect x="0" y="13" width="2" height="1" fill="#000"/><path d="M4 9 h4 v1 h-4 z M4 11 h4 v1 h-4 z M4 13 h4 v1 h-4 z" fill="#0000a0"/><path d="M1 7 h1 v1 h-1 z M1 9 h1 v1 h-1 z M1 11 h1 v1 h-1 z" fill="#f4e800"/><path d="M4 0 v1 h1 v-1 z M4 2 v1 h1 v-1 z M0 0 h1 v1 h-1 z M1 1 h1 v1 h-1 z M2 2 h1 v1 h-1 z M7 1 h1 v1 h-1 z M6 2 h1 v1 h-1 z M0 3 h1 v1 h-1 z M2 4 h1 v1 h-1 z M1 5 h1 v1 h-1 z M5 5 h1 v1 h-1 z M6 6 h1 v1 h-1 z M5 3 h1 v1 h-1 z" fill="#f4e800"/><path d="M3 3 h1 v1 h-1 z M4 4 h1 v3 h-1 z" fill="#b0b0b0"/></svg>
<svg style="left:35px;top:41px" width="5" height="3" viewBox="0 0 5 3"><path d="M0 0 H5 V1 H4 V2 H3 V3 H2 V2 H1 V1 H0 Z" fill="#000"/></svg>
<svg style="left:47px;top:34px" width="16" height="15" viewBox="0 0 16 15"><rect x="3" y="5" width="12" height="9" fill="#fff"/><rect x="2" y="7" width="1" height="7" fill="#808080"/><rect x="6" y="4" width="9" height="1" fill="#808080"/><rect x="15" y="4" width="1" height="11" fill="#000"/><rect x="2" y="14" width="14" height="1" fill="#000"/><rect x="5" y="6" width="2" height="2" fill="#e00000"/><rect x="6" y="7" width="1" height="1" fill="#0000e0"/><rect x="9" y="6" width="2" height="2" fill="#00a000"/><rect x="10" y="7" width="1" height="1" fill="#0000e0"/><rect x="13" y="6" width="2" height="2" fill="#e00000"/><rect x="14" y="7" width="1" height="1" fill="#00a000"/><rect x="5" y="10" width="2" height="2" fill="#00b0b0"/><rect x="6" y="11" width="1" height="1" fill="#e00000"/><rect x="9" y="10" width="2" height="2" fill="#0000e0"/><rect x="10" y="11" width="1" height="1" fill="#00a000"/><rect x="13" y="10" width="2" height="2" fill="#00a000"/><rect x="14" y="11" width="1" height="1" fill="#e00000"/><path d="M4 0 v1 h1 v-1 z M4 2 v1 h1 v-1 z M0 0 h1 v1 h-1 z M1 1 h1 v1 h-1 z M2 2 h1 v1 h-1 z M7 1 h1 v1 h-1 z M6 2 h1 v1 h-1 z M0 3 h1 v1 h-1 z M2 4 h1 v1 h-1 z M1 5 h1 v1 h-1 z M5 5 h1 v1 h-1 z M6 6 h1 v1 h-1 z M5 3 h1 v1 h-1 z" fill="#f4e800"/><path d="M3 3 h1 v1 h-1 z M4 4 h1 v3 h-1 z" fill="#b0b0b0"/></svg>
<svg style="left:69px;top:41px" width="5" height="3" viewBox="0 0 5 3"><path d="M0 0 H5 V1 H4 V2 H3 V3 H2 V2 H1 V1 H0 Z" fill="#000"/></svg>
<svg style="left:81px;top:34px" width="17" height="14" viewBox="0 0 17 14"><path d="M0.500 13.500 V4.500 H3.500 L4.500 5.500 H10.500 V8.500 H5 Z" fill="#fafaa0" stroke="#46463a" shape-rendering="auto"/><path d="M0.500 13.500 L5 8.500 H16 L11 13.500 Z" fill="#a1a141" stroke="#46463a" shape-rendering="auto"/><path d="M8.300 3 C9.500 0.800 12.500 0.800 14 3.300" stroke="#404040" stroke-width="1" fill="none" shape-rendering="auto"/><path d="M15.300 1.600 V4.800 H12.300 Z" fill="#303030" shape-rendering="auto"/></svg>
<svg style="left:105px;top:35px" width="14" height="14" viewBox="0 0 14 14"><g transform="translate(0,0)"><rect x="0.500" y="0.500" width="13" height="13" fill="#a1a141" stroke="#46463a"/><rect x="3" y="1" width="8" height="6" fill="#d8d6d8"/><rect x="12" y="1" width="1" height="1" fill="#fff"/><rect x="3" y="9" width="8" height="4" fill="#484848"/><rect x="9" y="10" width="2" height="3" fill="#f0f0f0"/></g></svg>
<svg style="left:127px;top:34px" width="16" height="15" viewBox="0 0 16 15"><rect x="4.500" y="0.500" width="10" height="10" fill="#a1a141" stroke="#46463a"/><rect x="6" y="1" width="7" height="1" fill="#d8d6d8"/><rect x="13" y="1" width="1" height="1" fill="#fff"/><rect x="2.500" y="2.500" width="10" height="10" fill="#a1a141" stroke="#46463a"/><rect x="4" y="3" width="7" height="1" fill="#d8d6d8"/><rect x="11" y="3" width="1" height="1" fill="#fff"/><rect x="0.500" y="4.500" width="10" height="10" fill="#a1a141" stroke="#46463a"/><rect x="2" y="5" width="6" height="5" fill="#d8d6d8"/><rect x="9" y="5" width="1" height="1" fill="#fff"/><rect x="2" y="11" width="6" height="3" fill="#484848"/><rect x="6" y="12" width="1" height="2" fill="#f0f0f0"/></svg>
<div class="sep" style="left:149px;top:31px;height:22px"></div>
<svg style="left:159px;top:35px" width="10" height="14" viewBox="0 0 10 14" shape-rendering="auto"><path d="M2.500 0 V2.500 L6.300 8.800 M7.500 0 V2.500 L3.700 8.800" stroke="#484848" stroke-width="1" fill="none"/><ellipse cx="2.300" cy="10.800" rx="1.900" ry="2.500" fill="none" stroke="#4646c4" stroke-width="0.950" transform="rotate(15 2.300 10.800)"/><ellipse cx="7.700" cy="10.800" rx="1.900" ry="2.500" fill="none" stroke="#4646c4" stroke-width="0.950" transform="rotate(-15 7.700 10.800)"/></svg>
<svg style="left:179px;top:35px" width="16" height="14" viewBox="0 0 16 14"><path d="M0.5 0.5 H5 L8.5 3.5 V9.5 H0.5 Z" fill="#fff" stroke="#383838"/><path d="M2 3.5 H5 M2 5.5 H6 M2 7.5 H6" stroke="#383838" fill="none"/><path d="M6.5 3.5 H11 L14.5 6.5 V13.5 H6.5 Z" fill="#fff" stroke="#3030b0"/><path d="M11 3.5 V6.5 H14.5" stroke="#3030b0" fill="none"/><path d="M8 7.5 H10 M8 9.5 H13 M8 11.5 H13" stroke="#383838" fill="none"/></svg>
<svg style="left:202px;top:35px" width="16" height="14" viewBox="0 0 16 14"><rect x="0" y="1.500" width="14" height="11.500" rx="2" fill="#aca899" shape-rendering="auto"/><rect x="4" y="0" width="7" height="3" rx="1" fill="#aca899" shape-rendering="auto"/><rect x="4" y="3" width="7" height="1" fill="#dedbcc"/><path d="M7.500 7.500 H13 L15.500 9.500 V13.500 H7.500 Z" fill="#e4e1d2" stroke="#aca899"/><path d="M9 9.500 H12 M9 11.500 H14" stroke="#aca899" fill="none"/></svg>
<div class="sep" style="left:224px;top:31px;height:22px"></div>
<svg style="left:233px;top:38px" width="13" height="7" viewBox="0 0 13 7" shape-rendering="auto"><path d="M0 0 V6 H6 Z" fill="#aca899"/><path d="M3 4 C5 -0.5 11 -0.5 11.5 3 C11.8 5 10 6.5 8 6.5" stroke="#aca899" stroke-width="1.3" fill="none"/></svg>
<svg style="left:253px;top:41px" width="5" height="3" viewBox="0 0 5 3"><path d="M0 0 H5 V1 H4 V2 H3 V3 H2 V2 H1 V1 H0 Z" fill="#aca899"/></svg>
<svg style="left:267px;top:38px" width="13" height="7" viewBox="0 0 13 7" shape-rendering="auto"><path d="M13 0 V6 H7 Z" fill="#aca899"/><path d="M10 4 C8 -0.5 2 -0.5 1.5 3 C1.2 5 3 6.5 5 6.5" stroke="#aca899" stroke-width="1.3" fill="none"/></svg>
<svg style="left:287px;top:41px" width="5" height="3" viewBox="0 0 5 3"><path d="M0 0 H5 V1 H4 V2 H3 V3 H2 V2 H1 V1 H0 Z" fill="#aca899"/></svg>
<svg style="left:299px;top:34px" width="17" height="16" viewBox="0 0 17 16"><rect x="4" y="0" width="12" height="12" fill="#fff"/><rect x="4" y="0" width="12" height="2" fill="#000080"/><rect x="4" y="2" width="3" height="9" fill="#a8a8a8"/><rect x="5" y="2" width="1" height="9" fill="#d0d0d0"/><rect x="15" y="2" width="1" height="10" fill="#000"/><rect x="6" y="11" width="10" height="1" fill="#000"/><path d="M8 3 h4 v1 h-4 z M13 3 h1 v1 h-1 z M12 7 h2 v1 h-2 z" fill="#00a000"/><path d="M8 5 h3 v1 h-3 z M12 5 h2 v1 h-2 z M8 7 h3 v1 h-3 z M10 9 h3 v1 h-3 z" fill="#a0a0a0"/><path d="M0.500 11 L5 6.500 V9.500 H9.500 V12.500 H5 V15.500 Z" fill="#00e8ff" stroke="#000" stroke-width="1" shape-rendering="auto"/></svg>
<svg style="left:321px;top:41px" width="5" height="3" viewBox="0 0 5 3"><path d="M0 0 H5 V1 H4 V2 H3 V3 H2 V2 H1 V1 H0 Z" fill="#000"/></svg>
<svg style="left:333px;top:34px" width="17" height="16" viewBox="0 0 17 16"><rect x="0" y="0" width="12" height="12" fill="#aca899"/><rect x="3" y="2" width="8" height="8" fill="#d6d3c3"/><path d="M4 3.500 H7 M8 3.500 H10 M4 5.500 H7 M8 5.500 H10 M4 7.500 H7 M8 7.500 H10" stroke="#aca899" fill="none"/><path d="M16.500 11 L12 6.500 V9.500 H6.500 V12.500 H12 V15.500 Z" fill="#aca899" shape-rendering="auto"/></svg>
<div class="sep" style="left:355px;top:31px;height:22px"></div>
<svg style="left:372px;top:40px" width="6" height="10" viewBox="0 0 6 10" shape-rendering="auto"><path d="M0 0 L5.5 5 L0 10 Z" fill="#3838b0"/></svg>
<div class="a" style="left:383px;top:33px;width:98px;height:18px;background:#fff"></div>
<div class="a" style="left:469px;top:34px;width:11px;height:16px;background:#ece9d8"></div>
<svg style="left:472px;top:41px" width="5" height="3" viewBox="0 0 5 3"><path d="M0 0 H5 V1 H4 V2 H3 V3 H2 V2 H1 V1 H0 Z" fill="#000"/></svg>
<div class="t" style="left:383.90px;top:36px;letter-spacing:0.207px;">Default</div>
<div class="sep" style="left:484px;top:31px;height:22px"></div>
<svg style="left:491px;top:36px" width="17" height="14" viewBox="0 0 17 14"><path d="M0.500 13.500 V4.500 H3.500 L5 6 V8.500 Z" fill="#fafa90" stroke="#46463a" shape-rendering="auto"/><path d="M0.500 13.500 L5 8.500 H14.500 L10.500 13.500 Z" fill="#a1a141" stroke="#3a3a2a" shape-rendering="auto"/><path d="M5 9 V5 L7 3 V1 H9 V3 L10 4 H11 L12 3 V1 H14 V3 L16 5 V9 H15 V8 H5 Z" fill="#3c3c3c"/><rect x="6" y="4" width="1" height="2" fill="#fff"/><rect x="12" y="4" width="1" height="2" fill="#fff"/><rect x="10" y="5" width="1" height="1" fill="#c0c0c0"/><rect x="6" y="7" width="1" height="1" fill="#fff"/><rect x="9" y="7" width="1" height="1" fill="#f0e000"/><rect x="11" y="7" width="1" height="1" fill="#fff"/><rect x="13" y="7" width="1" height="1" fill="#fff"/></svg>
<div class="a" style="left:512px;top:33px;width:183px;height:18px;background:#fff"></div>
<div class="a" style="left:683px;top:34px;width:11px;height:16px;background:#ece9d8"></div>
<svg style="left:686px;top:41px" width="5" height="3" viewBox="0 0 5 3"><path d="M0 0 H5 V1 H4 V2 H3 V3 H2 V2 H1 V1 H0 Z" fill="#000"/></svg>
<div class="t" style="left:514.00px;top:35px;letter-spacing:0.219px;">result</div>
<div class="sep" style="left:698px;top:31px;height:22px"></div>
<svg style="left:706px;top:35px" width="15" height="15" viewBox="0 0 15 15"><rect x="0.500" y="0.500" width="12" height="11" fill="#f4f4f4" stroke="#909090"/><rect x="0" y="0" width="13" height="2" fill="#3030a0"/><path d="M5 3 h1 v1 h-1 z M7 3 h1 v1 h-1 z M9 3 h1 v1 h-1 z M11 3 h1 v1 h-1 z M6 4 h1 v1 h-1 z M8 4 h1 v1 h-1 z M10 4 h1 v1 h-1 z M7 5 h1 v1 h-1 z M9 5 h1 v1 h-1 z M11 5 h1 v1 h-1 z M8 6 h1 v1 h-1 z M10 6 h1 v1 h-1 z" fill="#c8c8c8"/><g shape-rendering="auto" fill="none" stroke-width="2.300"><path d="M5 7.900 A2.600 2.900 0 0 0 2.400 10.800" stroke="#20c828"/><path d="M2.400 10.800 A2.600 2.900 0 0 0 5 13.700" stroke="#2848e0"/><path d="M5 7.900 A2.600 2.900 0 0 1 5 13.700" stroke="#f0e820"/><path d="M11.600 7.900 A2.600 2.900 0 0 1 14.200 10.800" stroke="#2848e0"/><path d="M14.200 10.800 A2.600 2.900 0 0 1 11.600 13.700" stroke="#20c828"/><path d="M11.600 7.900 A2.600 2.900 0 0 0 11.600 13.700" stroke="#f0e820"/><path d="M5.400 13.900 L11.300 7.500" stroke="#e02828" stroke-width="2.100"/></g></svg>
<svg style="left:728px;top:35px" width="17" height="14" viewBox="0 0 17 14"><rect x="0.500" y="3.500" width="11" height="10" fill="#fff" stroke="#303030"/><path d="M2 8.500 H4 M5 8.500 H10 M2 10.500 H4 M5 10.500 H10 M2 6.500 H5" stroke="#303030" fill="none"/><g shape-rendering="auto"><path d="M4 5 L8 1 L11 1 L13 3 L9.500 7 Z" fill="#c8c8c8" stroke="#505050" stroke-width="0.8"/><path d="M10 0.500 H14.500 V5 L12.500 5.500 L10 2.500 Z" fill="#c0c0c8" stroke="#606060" stroke-width="0.6"/></g><rect x="14" y="0" width="2" height="6" fill="#2828c0"/></svg>
<div class="a" style="left:286px;top:80px;width:313px;height:24px;background:#efedde;border-radius:2px 2px 0 0"></div>
<div class="grip" style="left:288px;top:83px;height:15px"></div>
<svg style="left:296px;top:83px" width="16" height="15" viewBox="0 0 16 15"><rect x="1" y="2" width="12" height="9" fill="#fff"/><rect x="0" y="0" width="14" height="2" fill="#3434a8"/><rect x="0" y="2" width="1" height="10" fill="#383838"/><rect x="0" y="11" width="6" height="1" fill="#383838"/><rect x="13" y="2" width="1" height="4" fill="#383838"/><path d="M2 3 h4 v1 h-4 z M7 3 h2 v1 h-2 z M2 5 h2 v1 h-2 z M2 7 h2 v1 h-2 z" fill="#a0a0a0"/><rect x="5.500" y="5.500" width="6" height="9" fill="#fff" stroke="#909090"/><path d="M7 7.500 H10 M7 9.500 H10" stroke="#303030" fill="none"/><rect x="13" y="7" width="1" height="6" fill="#3434a8"/><path d="M11 12 H16 L13.500 15 Z" fill="#3434a8" shape-rendering="auto"/></svg>
<svg style="left:319px;top:83px" width="16" height="15" viewBox="0 0 16 15"><rect x="0.500" y="0.500" width="6" height="4" fill="#40e8f8" stroke="#383838"/><rect x="1.500" y="4.500" width="5" height="3" fill="#fff" stroke="#383838"/><rect x="3.500" y="6.500" width="5" height="3" fill="#909090" stroke="#484848"/><g transform="translate(7,0)"><path d="M0.500 0.500 V8.500 L2.300 6.900 L3.900 10 L5.100 9.400 L3.600 6.400 H5.700 Z" fill="#fff" stroke="#282828" stroke-width="0.900" shape-rendering="auto"/></g><rect x="7.500" y="10.500" width="8" height="4" fill="#fff" stroke="#383838"/><path d="M8 11.500 H15 M8 13.500 H15" stroke="#f2ea50" stroke-dasharray="1 1" fill="none"/></svg>
<svg style="left:342px;top:83px" width="16" height="15" viewBox="0 0 16 15"><g transform="translate(0,0)"><path d="M0.500 0.500 V8.500 L2.300 6.900 L3.900 10 L5.100 9.400 L3.600 6.400 H5.700 Z" fill="#fff" stroke="#282828" stroke-width="0.900" shape-rendering="auto"/></g><rect x="1.500" y="9.500" width="14" height="4" fill="#fff" stroke="#383838"/><path d="M2 10.500 H15 M2 12.500 H15" stroke="#f2ea50" stroke-dasharray="1 1" fill="none"/></svg>
<svg style="left:366px;top:88px" width="8" height="7" viewBox="0 0 8 7"><path d="M3 0 h2 v2 h-2 z M2 2 h1 v2 h-1 z M4 2 h2 v2 h-2 z M1 4 h6 v1 h-6 z M1 5 h1 v1 h-1 z M5 5 h2 v1 h-2 z M0 6 h3 v1 h-3 z M4 6 h4 v1 h-4 z" fill="#454545"/></svg>
<svg style="left:373px;top:88px" width="7" height="8" viewBox="0 0 7 8"><path d="M0 2.500 H5" stroke="#3030c0" stroke-width="1.200" fill="none"/><path d="M3.500 0 L6.500 2.500 L3.500 5 Z" fill="#3030c0" shape-rendering="auto"/><path d="M0 6.500 H6" stroke="#404040" stroke-dasharray="1 1" fill="none"/></svg>
<div class="sep" style="left:387px;top:80px;height:22px"></div>
<svg style="left:394px;top:83px" width="17" height="15" viewBox="0 0 17 15"><path d="M2 2.500 H6 M8 2.500 H16 M2 10.500 H6 M8 10.500 H16 M2 12.500 H6" stroke="#404040" fill="none"/><path d="M8 4 H16 V6 H8 Z M8 7 H13 V9 H8 Z" fill="#404040"/><path d="M7.500 0 V15" stroke="#404040" stroke-dasharray="1 1" fill="none"/><g transform="translate(0,2)"><path d="M0 4.500 H5" stroke="#3030c0" stroke-width="1.200" fill="none"/><path d="M3 2 L0 4.500 L3 7 Z" fill="#3030c0" shape-rendering="auto"/></g></svg>
<svg style="left:417px;top:83px" width="17" height="15" viewBox="0 0 17 15"><path d="M2 2.500 H6 M8 2.500 H16 M2 10.500 H6 M8 10.500 H16 M2 12.500 H6" stroke="#404040" fill="none"/><path d="M8 4 H16 V6 H8 Z M8 7 H13 V9 H8 Z" fill="#404040"/><path d="M7.500 0 V15" stroke="#404040" stroke-dasharray="1 1" fill="none"/><g transform="translate(0,2)"><path d="M0 4.500 H5" stroke="#3030c0" stroke-width="1.200" fill="none"/><path d="M2.500 2 L5.500 4.500 L2.500 7 Z" fill="#3030c0" shape-rendering="auto"/></g></svg>
<div class="sep" style="left:439px;top:80px;height:22px"></div>
<svg style="left:447px;top:85px" width="14" height="13" viewBox="0 0 14 13"><path d="M0 0.500 H1 M3 0.500 H13 M5 9.500 H13 M2 12.500 H13" stroke="#404040" fill="none"/><path d="M3 3.500 H13 M3 6.500 H13" stroke="#40e8f8" fill="none"/></svg>
<svg style="left:471px;top:83px" width="13" height="15" viewBox="0 0 13 15"><path d="M4 11.500 H12 M1 14.500 H12" stroke="#404040" fill="none"/><path d="M2 5.500 H12 M2 8.500 H12" stroke="#40e8f8" fill="none"/><path d="M3 3.500 C4 0 9.500 0 9.500 3 C9.500 4.500 8 5.500 6.500 5" stroke="#3030c0" stroke-width="1" fill="none" shape-rendering="auto"/><path d="M0 1 V5.500 H4.500 Z" fill="#3030c0" shape-rendering="auto"/></svg>
<div class="sep" style="left:491px;top:80px;height:22px"></div>
<svg style="left:498px;top:83px" width="17" height="15" viewBox="0 0 17 15"><g shape-rendering="auto"><path d="M0.300 14.700 L12.800 2" stroke="#303030" stroke-width="1.100" fill="none"/><path d="M8 7.500 L11.300 4.200 L13.800 7 L16.200 10 L12 13.900 L8.300 11 Z" fill="#4848ee" stroke="#282880" stroke-width="0.500"/><path d="M9.500 9.500 L12.800 6.500 L14 8.500 L10.800 11.500 Z" fill="#3838b0"/></g></svg>
<svg style="left:521px;top:83px" width="17" height="15" viewBox="0 0 17 15"><g shape-rendering="auto"><path d="M0.300 14.700 L12.800 2" stroke="#303030" stroke-width="1.100" fill="none"/><path d="M8 7.500 L11.300 4.200 L13.800 7 L16.200 10 L12 13.900 L8.300 11 Z" fill="#4848ee" stroke="#282880" stroke-width="0.500"/><path d="M9.500 9.500 L12.800 6.500 L14 8.500 L10.800 11.500 Z" fill="#3838b0"/><path d="M0 2.200 H3.500 V0 L7.200 3.800 L3.500 7.600 V5.600 H0 Z" fill="#404040"/></g></svg>
<svg style="left:544px;top:83px" width="17" height="15" viewBox="0 0 17 15"><g shape-rendering="auto"><path d="M0.300 14.700 L12.800 2" stroke="#303030" stroke-width="1.100" fill="none"/><path d="M8 7.500 L11.300 4.200 L13.800 7 L16.200 10 L12 13.900 L8.300 11 Z" fill="#4848ee" stroke="#282880" stroke-width="0.500"/><path d="M9.500 9.500 L12.800 6.500 L14 8.500 L10.800 11.500 Z" fill="#3838b0"/><path d="M7.200 2.200 H3.700 V0 L0 3.800 L3.700 7.600 V5.600 H7.200 Z" fill="#404040"/></g></svg>
<svg style="left:567px;top:83px" width="17" height="15" viewBox="0 0 17 15"><g shape-rendering="auto"><path d="M0.300 14.700 L12.800 2" stroke="#303030" stroke-width="1.100" fill="none"/><path d="M8 7.500 L11.300 4.200 L13.800 7 L16.200 10 L12 13.900 L8.300 11 Z" fill="#4848ee" stroke="#282880" stroke-width="0.500"/><path d="M9.500 9.500 L12.800 6.500 L14 8.500 L10.800 11.500 Z" fill="#3838b0"/><path d="M1.800 0.800 L9 7.800 M9 0.800 L1.800 7.800" stroke="#c83434" stroke-width="1.400" fill="none"/></g></svg>
<svg style="left:590px;top:95px" width="5" height="3" viewBox="0 0 5 3"><path d="M0 0 H5 V1 H4 V2 H3 V3 H2 V2 H1 V1 H0 Z" fill="#000"/></svg>
</body>
</html>
